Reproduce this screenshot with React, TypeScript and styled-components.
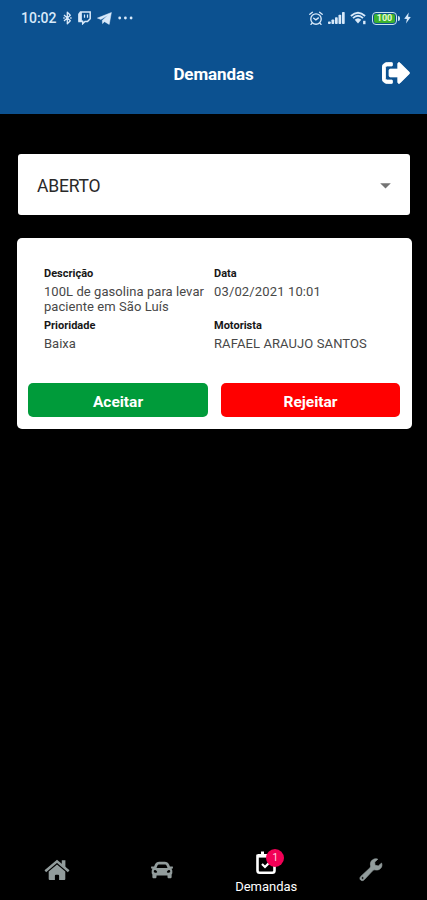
import React from 'react';
import styled, { createGlobalStyle } from 'styled-components';
import { FaCar, FaSignOutAlt } from 'react-icons/fa';

const GlobalStyle = createGlobalStyle`
  *, *::before, *::after { box-sizing: border-box; }
  body { margin: 0; background: #000; font-family: Roboto, "Liberation Sans", sans-serif; }
  button { font-family: inherit; }
  svg { display: block; flex: none; }
`;

const Screen = styled.div`
  width: 427px;
  height: 900px;
  display: flex;
  flex-direction: column;
  background: #000;
  overflow: hidden;
`;

const Header = styled.header`
  height: 114px;
  background: #0c5190;
  color: #fff;
`;

const StatusBar = styled.div`
  height: 36px;
  padding: 0 16px 0 21px;
  display: flex;
  align-items: center;
  justify-content: space-between;
  color: #d8e9fa;
`;

const StatusGroup = styled.div<{ $gap: number }>`
  display: flex;
  align-items: center;
  gap: ${({ $gap }) => $gap}px;
`;

const Clock = styled.span`
  width: 36px;
  font-size: 14px;
  line-height: 16px;
  font-weight: 500;
  white-space: nowrap;
`;

const TitleBar = styled.div`
  height: 76px;
  padding: 0 17px;
  display: grid;
  grid-template-columns: 1fr auto 1fr;
  align-items: center;
`;

const Title = styled.h1`
  grid-column: 2;
  margin: 0;
  font-size: 17px;
  line-height: 20px;
  font-weight: 700;
  letter-spacing: -0.1px;
`;

const LogoutButton = styled.button`
  justify-self: end;
  margin-top: -2px;
  padding: 0;
  border: 0;
  background: none;
  color: #fff;

  path { stroke: currentColor; stroke-width: 14px; }
`;

const Content = styled.main`
  flex: 1;
  padding: 40px 15px 0 17px;
  display: flex;
  flex-direction: column;
  gap: 23px;
`;

const Select = styled.div`
  height: 61px;
  margin: 0 2px 0 1px;
  padding: 3px 19px 0 19px;
  display: flex;
  align-items: center;
  justify-content: space-between;
  border-radius: 3px;
  background: #fff;
  color: #292929;
  font-size: 17.5px;
  letter-spacing: -0.2px;
`;

const Card = styled.article`
  height: 191px;
  padding: 28px 12px 12px 11px;
  display: flex;
  flex-direction: column;
  justify-content: space-between;
  border-radius: 5px;
  background: #fff;
`;

const Details = styled.dl`
  margin: 0;
  padding-left: 16px;
  display: grid;
  grid-template-columns: 170px 1fr;
`;

const Field = styled.div<{ $tall?: boolean }>`
  height: ${({ $tall }) => ($tall ? 52 : 34)}px;
`;

const Label = styled.dt`
  height: 14px;
  font-size: 11px;
  line-height: 15px;
  font-weight: 700;
  color: #171717;
`;

const Value = styled.dd<{ $spacing?: number }>`
  margin: 4px 0 0;
  font-size: 13px;
  line-height: 15px;
  color: #484848;
  letter-spacing: ${({ $spacing = 0 }) => $spacing}px;
  white-space: nowrap;
`;

const Actions = styled.div`
  display: grid;
  grid-template-columns: 180px 179px;
  justify-content: space-between;
`;

const ActionButton = styled.button<{ $color: string }>`
  height: 34px;
  padding: 3px 0 0;
  border: 0;
  border-radius: 5px;
  background: ${({ $color }) => $color};
  color: #fff;
  font-size: 15.5px;
  font-weight: 700;
`;

const TabBar = styled.nav`
  height: 60px;
  padding: 0 4px 0 5px;
  display: grid;
  grid-template-columns: repeat(4, 1fr);
`;

const Tab = styled.div<{ $active?: boolean }>`
  display: flex;
  flex-direction: column;
  align-items: center;
  justify-content: ${({ $active }) => ($active ? 'flex-start' : 'center')};
  padding-top: ${({ $active }) => ($active ? 11 : 0)}px;
  color: ${({ $active }) => ($active ? '#fff' : '#929c9c')};
`;

const BadgeAnchor = styled.div`
  position: relative;
`;

const Badge = styled.span`
  position: absolute;
  left: 10px;
  top: -2px;
  width: 18px;
  height: 18px;
  border-radius: 50%;
  background: #f20056;
  color: #ffd4e3;
  font-size: 10px;
  line-height: 18px;
  text-align: center;
`;

const TabLabel = styled.span`
  margin-top: 4px;
  font-size: 13px;
  line-height: 16px;
`;

const BluetoothIcon = () => (
  <svg width="9" height="14" viewBox="0 0 9 14" fill="none" stroke="currentColor" strokeWidth="1.3" strokeLinejoin="round">
    <path d="M1 4 7.3 9.8 4.3 12.8V1.2l3 3L1 10" />
    <path d="M.3 7h1.4M7.2 7h1.4" />
  </svg>
);

const TwitchIcon = () => (
  <svg width="13" height="14" viewBox="0 0 13 14" fill="none" stroke="currentColor">
    <path d="M2.5 1h9.7v6.8L9.5 10.5H7L4.7 12.7v-2.2H1V3z" strokeWidth="1.5" />
    <path d="M1 3.3 3.3 1v8L5 10.5H1z" fill="currentColor" />
    <path d="M6.5 3.5v3.2M9.5 3.5v3.2" strokeWidth="1.2" />
  </svg>
);

const TelegramIcon = () => (
  <svg width="15" height="13" viewBox="0 0 15 13">
    <path d="M14.4.5 12.2 12.4 7.6 9.7 5.5 11.6 5.3 8.2 11 3.3 3.8 7.4.4 6.1z" fill="currentColor" stroke="currentColor" strokeWidth=".5" />
  </svg>
);

const DotsIcon = () => (
  <svg width="15" height="4" viewBox="0 0 15 4" fill="currentColor">
    <circle cx="1.7" cy="2" r="1.4" />
    <circle cx="7.4" cy="2" r="1.4" />
    <circle cx="13.1" cy="2" r="1.4" />
  </svg>
);

const AlarmIcon = () => (
  <svg width="14" height="15" viewBox="0 0 14 15" fill="none" stroke="currentColor" strokeWidth="1.35" strokeLinecap="round">
    <circle cx="7" cy="8" r="5.2" />
    <path d="M.8 3.3 3.4 1.3M13.2 3.3 10.6 1.3M4.7 7.2 6.9 8.9 9.4 6.9M3 12.2 2 13.4M11 12.2 12 13.4" />
  </svg>
);

const SignalIcon = () => (
  <svg width="17" height="12" viewBox="0 0 17 12" fill="currentColor">
    <rect x="0" y="9.5" width="2.7" height="2.5" rx=".7" />
    <rect x="3.5" y="7.5" width="2.7" height="4.5" rx=".7" />
    <rect x="7" y="5.2" width="2.7" height="6.8" rx=".7" />
    <rect x="10.5" y="2.8" width="2.7" height="9.2" rx=".7" />
    <rect x="14" y="0" width="2.7" height="12" rx=".7" />
  </svg>
);

const WifiIcon = () => (
  <svg width="17" height="14" viewBox="0 0 17 14" fill="none" stroke="currentColor">
    <path d="M.9 5Q8-1.6 15.1 5M3 7.1Q8 2.5 13 7.1" strokeWidth="1.8" />
    <path d="M4.7 8.7Q8 5.7 11.3 8.7L8 12.5z" fill="currentColor" stroke="none" />
    <path d="M14.3 9.8v3.4" strokeWidth="2.4" />
  </svg>
);

const BoltIcon = () => (
  <svg width="7" height="12" viewBox="0 0 7 12">
    <path d="M4.8.5.2 6.8l2.7.3L2 11.5 6.8 5 4.1 4.7z" fill="currentColor" />
  </svg>
);

const BatteryBody = styled.span`
  width: 25px;
  height: 13px;
  display: block;
  border: 1.5px solid #c9e3f2;
  border-radius: 4px;
  padding: 1px;
`;

const BatteryCharge = styled.span`
  display: block;
  height: 9px;
  border-radius: 2px;
  background: #3bb22f;
  color: #e6f7d5;
  font-size: 9px;
  line-height: 9px;
  font-weight: 700;
  text-align: center;
`;

const BatteryTip = styled.span`
  width: 2px;
  height: 5px;
  border-radius: 0 2px 2px 0;
  background: #c9e3f2;
`;

const HomeIcon = () => (
  <svg width="26" height="22" viewBox="0 0 26 22">
    <path d="M1.3 12.2 13 2.3l11.7 9.9" fill="none" stroke="currentColor" strokeWidth="2.5" />
    <path d="M17.8 1.2h3.6v8.2l-3.6-3z" fill="currentColor" />
    <path d="M13 5.4 21.3 12.4V20a1 1 0 0 1-1 1H15.1v-4.2a1 1 0 0 0-1-1h-2.2a1 1 0 0 0-1 1V21H5.7a1 1 0 0 1-1-1v-7.6z" fill="currentColor" />
  </svg>
);

const WrenchIcon = () => (
  <svg width="24" height="24" viewBox="0 0 24 24">
    <path
      fill="currentColor"
      stroke="currentColor"
      strokeWidth=".7"
      fillRule="evenodd"
      d="M18.8 1.2 15.7 4.1 16 7.3 19.3 7.9 22.6 5.1C24 9.2 20.7 12.7 16.3 11.9 15.2 11.7 14.4 12 13.6 12.8L5.2 21.7C2.7 24.3-.7 20.9 1.8 18.4L10.5 10.3C11.5 9.3 11.8 8.6 11.5 7.3 10.7 3.1 14.5-.2 18.8 1.2zM3.6 18.8a1.2 1.2 0 1 0 0 2.4 1.2 1.2 0 0 0 0-2.4z"
    />
  </svg>
);

const TaskIcon = () => (
  <svg width="20" height="24" viewBox="0 0 20 24" fill="none" stroke="currentColor">
    <path d="M1.5 4.5h17v15a2.2 2.2 0 0 1-2.2 2.2H3.7a2.2 2.2 0 0 1-2.2-2.2z" strokeWidth="2.6" strokeLinejoin="round" />
    <path d="M2 4.8h16" strokeWidth="3.6" />
    <path d="M6.5 .5V4" strokeWidth="3" />
    <path d="m6 13 3 3 5.6-5.6" strokeWidth="2.2" />
  </svg>
);

const CaretIcon = () => (
  <svg width="11" height="6" viewBox="0 0 11 6">
    <path d="M.2.2h10.6L5.5 5.5z" fill="#747474" />
  </svg>
);

export default function App() {
  return (
    <>
      <GlobalStyle />
      <Screen>
        <Header>
          <StatusBar>
            <StatusGroup $gap={6}>
              <Clock>10:02</Clock>
              <BluetoothIcon />
              <TwitchIcon />
              <TelegramIcon />
              <DotsIcon />
            </StatusGroup>
            <StatusGroup $gap={4}>
              <StatusGroup $gap={5}>
                <AlarmIcon />
                <SignalIcon />
                <WifiIcon />
                <StatusGroup $gap={1}>
                  <BatteryBody><BatteryCharge>100</BatteryCharge></BatteryBody>
                  <BatteryTip />
                </StatusGroup>
              </StatusGroup>
              <BoltIcon />
            </StatusGroup>
          </StatusBar>
          <TitleBar>
            <Title>Demandas</Title>
            <LogoutButton aria-label="Sair"><FaSignOutAlt size={28} /></LogoutButton>
          </TitleBar>
        </Header>
        <Content>
          <Select>ABERTO<CaretIcon /></Select>
          <Card>
            <Details>
              <Field $tall>
                <Label>Descrição</Label>
                <Value $spacing={0.06}>100L de gasolina para levar<br />paciente em São Luís</Value>
              </Field>
              <Field $tall>
                <Label>Data</Label>
                <Value $spacing={0.14}>03/02/2021 10:01</Value>
              </Field>
              <Field>
                <Label>Prioridade</Label>
                <Value>Baixa</Value>
              </Field>
              <Field>
                <Label>Motorista</Label>
                <Value $spacing={0.1}>RAFAEL ARAUJO SANTOS</Value>
              </Field>
            </Details>
            <Actions>
              <ActionButton $color="#009b3a">Aceitar</ActionButton>
              <ActionButton $color="#ff0000">Rejeitar</ActionButton>
            </Actions>
          </Card>
        </Content>
        <TabBar>
          <Tab><HomeIcon /></Tab>
          <Tab><FaCar size={22} /></Tab>
          <Tab $active>
            <BadgeAnchor><TaskIcon /><Badge>1</Badge></BadgeAnchor>
            <TabLabel>Demandas</TabLabel>
          </Tab>
          <Tab><WrenchIcon /></Tab>
        </TabBar>
      </Screen>
    </>
  );
}
